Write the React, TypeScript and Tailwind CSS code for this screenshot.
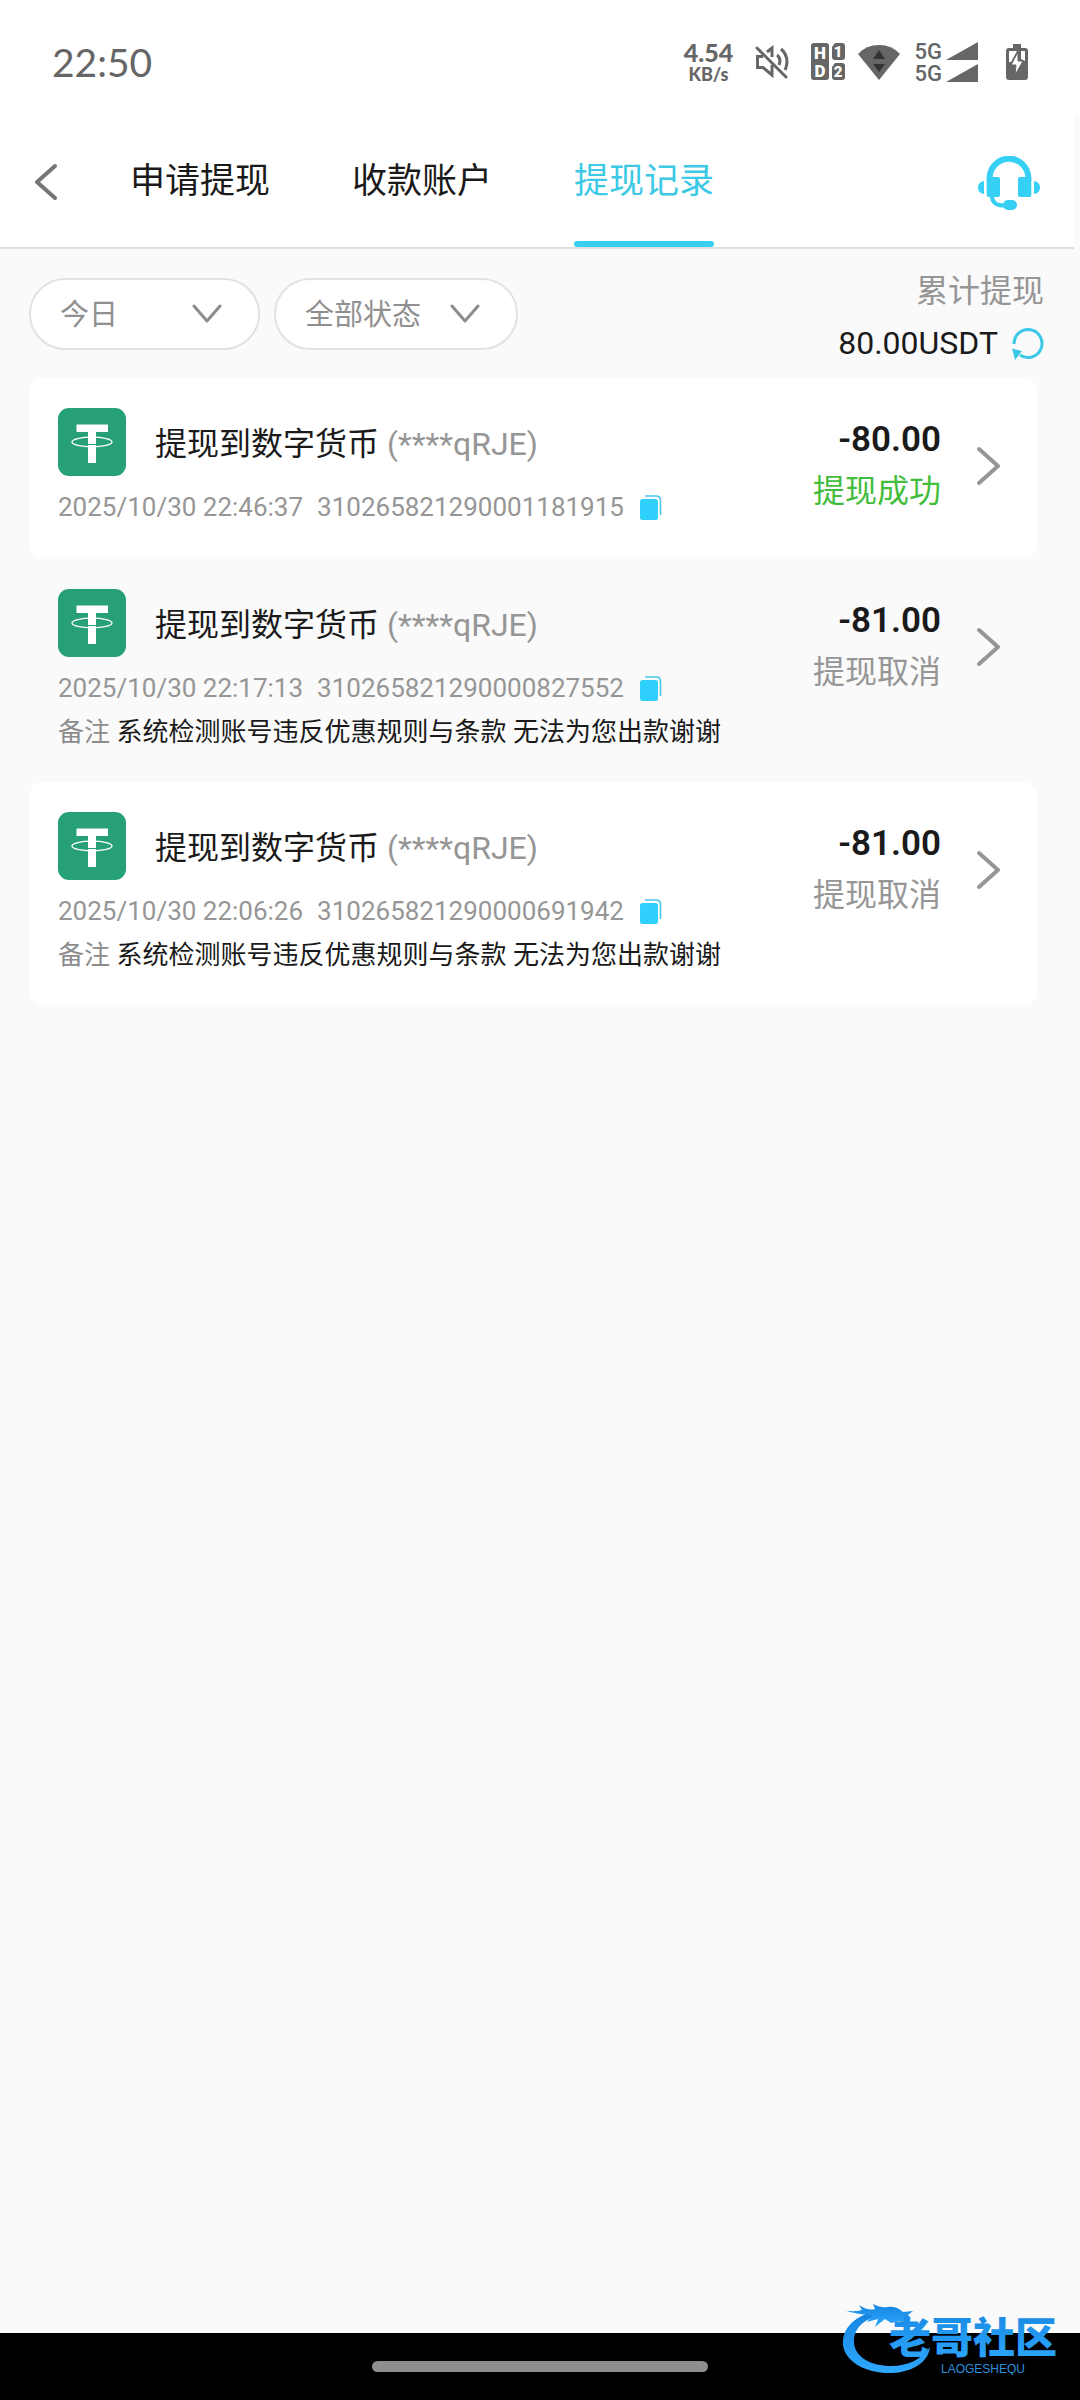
import { useState } from 'react';

const records = [
  { id: '310265821290001181915', time: '2025/10/30 22:46:37', amount: '-80.00', status: '提现成功', ok: true, bg: 'bg-white' },
  {
    id: '310265821290000827552',
    time: '2025/10/30 22:17:13',
    amount: '-81.00',
    status: '提现取消',
    ok: false,
    note: '系统检测账号违反优惠规则与条款 无法为您出款谢谢',
    bg: 'bg-transparent',
  },
  {
    id: '310265821290000691942',
    time: '2025/10/30 22:06:26',
    amount: '-81.00',
    status: '提现取消',
    ok: false,
    note: '系统检测账号违反优惠规则与条款 无法为您出款谢谢',
    bg: 'bg-white',
  },
];

const tabs = ['申请提现', '收款账户', '提现记录'];

function StatusBar() {
  return (
    <div className="h-[115px] bg-white flex justify-between items-start pl-[52px] pr-[52px] text-[#666]">
      <span className="font-['Lato'] text-[39px] leading-[48px] mt-[38px]">22:50</span>
      <div className="flex items-center mt-[40px] h-[44px]">
        <div className="w-[50px] flex flex-col items-center font-['Lato'] font-black">
          <span className="text-[25px] leading-[24px]">4.54</span>
          <span className="text-[18px] leading-[20px]">KB/s</span>
        </div>
        {/* Muted */}
        <svg className="ml-[21px]" width="34" height="34" viewBox="0 0 34 34" fill="none" stroke="#666" strokeWidth="3">
          <path d="M2 3 31 32" strokeLinecap="round" />
          <path d="M8 11.500H2.500V22.500H8L17 30V20" />
          <path d="M12 7 17 3V12" />
          <path d="M22 10Q25 12 25 16.500L24 20" />
          <path d="M26 4Q32 9 32 17Q32 21 30 25" />
        </svg>
        {/* HD on both SIMs */}
        <svg className="ml-[22px]" width="34" height="38" viewBox="0 0 34 38" fill="#666">
          <rect x="0" y="0" width="18" height="37" rx="3" />
          <path d="M24 0H31Q34 0 34 3V14Q34 17 31 17H24Q21 17 21 14V4Z" />
          <path d="M24 20H31Q34 20 34 23V34Q34 37 31 37H24Q21 37 21 34V24Z" />
          <g fill="#fff" fontFamily="Roboto" fontWeight="900" textAnchor="middle">
            <text x="9" y="16" fontSize="17">H</text>
            <text x="9" y="34" fontSize="17">D</text>
            <text x="27" y="14" fontSize="15">1</text>
            <text x="27" y="34" fontSize="15">2</text>
          </g>
        </svg>
        {/* Wi-Fi */}
        <svg className="ml-[13px]" width="42" height="36" viewBox="0 0 42 36" fill="#666">
          <path d="M0 10Q8 1 21 1T42 10L21 36Z" />
          <path d="M15 15 21 6 27 15ZM15 20H27L21 28Z" fill="#333" />
        </svg>
        <div className="ml-[15px] pt-[2px] flex flex-col font-['Roboto'] font-medium text-[22px] leading-[22px]">
          <span>5G</span>
          <span>5G</span>
        </div>
        <svg className="ml-[4px]" width="32" height="40" viewBox="0 0 32 40" fill="#666">
          <path d="M0 18 32 0V18ZM0 40 32 22V40Z" />
        </svg>
        {/* Charging */}
        <svg className="ml-[28px]" width="22" height="36" viewBox="0 0 22 36">
          <path d="M7 0H15V4H19Q22 4 22 7V33Q22 36 19 36H3Q0 36 0 33V7Q0 4 3 4H7Z" fill="#666" />
          <path d="M3 7H11L5 18H3ZM15 7H19V17L15 15Z" fill="#fff" />
          <path d="M12 8 5 21H10L9 31 17 17H12Z" fill="#fff" stroke="#666" strokeWidth="1" />
        </svg>
      </div>
    </div>
  );
}

function Header() {
  const [active, setActive] = useState(2);
  return (
    <header className="h-[134px] mr-[6px] pl-[22px] pr-[27px] bg-white border-b-2 border-[#dedede] flex items-center">
      <button aria-label="返回" className="w-[48px] h-[60px] flex items-center justify-center">
        <svg width="24" height="38" viewBox="0 0 24 38" fill="none" stroke="#757575" strokeWidth="4" strokeLinecap="round" strokeLinejoin="round">
          <path d="M21 4 3 20 21 36" />
        </svg>
      </button>
      <nav className="flex h-full gap-[82px] ml-[60px]">
        {tabs.map((tab, i) => (
          <button
            key={tab}
            onClick={() => setActive(i)}
            className={`relative h-full pt-[2px] text-[35px] ${i === active ? 'text-[#3bc9e6]' : 'text-[#1a1a1a]'}`}
          >
            {tab}
            {i === active && <span className="absolute left-0 right-0 bottom-0 h-[6px] rounded-full bg-[#38d0ee]" />}
          </button>
        ))}
      </nav>
      <button aria-label="客服" className="ml-auto px-[7px] pt-[4px]">
        <svg width="62" height="54" viewBox="0 0 62 54" fill="#36d0f5">
          <path d="M11.700 25V22A19.300 19.300 0 0 1 50.300 22V25" fill="none" stroke="#36d0f5" strokeWidth="6" />
          <path d="M8.700 21H20Q22 21 22 23V39Q22 41 20 41H10.700Q8.700 41 8.700 39ZM42 21H53.300V39Q53.300 41 51.300 41H42Q40 41 40 39V23Q40 21 42 21Z" />
          <path d="M6 25Q0 26 0 31.500T6 38ZM56 25Q62 26 62 31.500T56 38Z" />
          <path d="M14 40Q14 50 27 49.500" fill="none" stroke="#36d0f5" strokeWidth="4" />
          <rect x="25" y="44" width="14" height="10" rx="5" />
        </svg>
      </button>
    </header>
  );
}

function FilterSelect({ label, options, width }: { label: string; options: string[]; width: string }) {
  return (
    <div className={`relative h-[72px] ${width}`}>
      <select
        aria-label={label}
        className="appearance-none w-full h-full rounded-full border-2 border-[#e2e2e2] bg-white pt-[4px] pl-[29px] pr-[60px] text-[29px] text-[#909090] outline-none"
      >
        {options.map((o) => (
          <option key={o}>{o}</option>
        ))}
      </select>
      <svg
        className="absolute right-[38px] top-[24px] pointer-events-none"
        width="30" height="22" viewBox="0 0 30 22" fill="none" stroke="#8c8c8c" strokeWidth="3" strokeLinecap="round" strokeLinejoin="round"
      >
        <path d="M2 4 15 19 28 4" />
      </svg>
    </div>
  );
}

const TetherIcon = () => (
  <svg width="68" height="68" viewBox="0 0 68 68" className="shrink-0">
    <rect width="68" height="68" rx="11" fill="#279f78" />
    <path d="M18.500 16.500H50V24H38V55H30V24H18.500Z" fill="#fff" />
    <ellipse cx="34" cy="34" rx="20" ry="4.800" fill="none" stroke="#fff" strokeWidth="1.300" />
    <path d="M29 36.500H39" stroke="#279f78" strokeWidth="1" />
  </svg>
);

const CopyIcon = () => (
  <svg width="22" height="25" viewBox="0 0 22 25">
    <rect x="0" y="4" width="18" height="21" rx="2.500" fill="#2fd0fb" />
    <path d="M5 1H16Q20.500 1 20.500 5.500V20" fill="none" stroke="#45c8ea" strokeWidth="1.600" />
  </svg>
);

function RecordCard({ record }: { record: (typeof records)[number] }) {
  return (
    <li className={`flex items-start min-h-[181px] pt-[30px] pb-[27px] pl-[29px] pr-[24px] rounded-[14px] ${record.bg}`}>
      <div className="flex-1 min-w-0">
        <div className="flex items-center h-[68px]">
          <TetherIcon />
          <p className="ml-[29px] pt-[4px] text-[32px] leading-[44px] text-[#1a1a1a]">
            提现到数字货币 <span className="text-[#969696]">(****qRJE)</span>
          </p>
        </div>
        <div className="mt-[9px] flex items-center h-[44px] text-[26px] text-[#969696]">
          <span>{record.time}</span>
          <span className="ml-[14px]">{record.id}</span>
          <button aria-label="复制" className="ml-[16px]">
            <CopyIcon />
          </button>
        </div>
        {record.note && (
          <p className="text-[26px] leading-[45px] text-[#1a1a1a]">
            <span className="text-[#8c8c8c]">备注</span> {record.note}
          </p>
        )}
      </div>
      <div className="flex flex-col items-end pt-[2px]">
        <span className="text-[35px] leading-[60px] font-semibold text-[#1a1a1a]">{record.amount}</span>
        <span className={`text-[32px] leading-[42px] ${record.ok ? 'text-[#43bd3e]' : 'text-[#969696]'}`}>{record.status}</span>
      </div>
      <button aria-label="查看详情" className="ml-[24px] w-[48px] h-[116px] flex items-center justify-center">
        <svg width="24" height="40" viewBox="0 0 24 40" fill="none" stroke="#969696" strokeWidth="4" strokeLinecap="round" strokeLinejoin="round">
          <path d="M2 3 21 20 2 37" />
        </svg>
      </button>
    </li>
  );
}

function Watermark() {
  return (
    <svg className="absolute right-[15px] bottom-[25px]" width="224" height="72" viewBox="0 0 224 72">
      <defs>
        <linearGradient id="wm" x1="0" y1="0" x2="0" y2="1">
          <stop offset="0" stopColor="#1585e0" />
          <stop offset="1" stopColor="#2fa8ff" />
        </linearGradient>
      </defs>
      <g fill="url(#wm)">
        {/* Dragon body */}
        <path d="M28 10C10 16 1 28 2 42C4 59 26 71 51 70C74 69 88 57 89 44C82 55 68 63 50 63C30 63 14 54 13 40C12 28 20 18 34 14Z" />
        {/* Head and whiskers */}
        <path d="M0 6Q10 10 21 7L18 2Q27 8 34 6L32 1Q40 5 46 4Q56 3 62 9L72 8L67 12L70 16L62 15L69 20L58 18L50 20L44 16L34 24L37 16L26 19L32 12Q16 12 0 6Z" />
        <text x="48" y="50" fontSize="42" fontWeight="900" fontFamily="'Noto Sans CJK SC', sans-serif">老哥社区</text>
      </g>
      <text x="100" y="70" fontSize="12" fill="#2a8fdd" fontFamily="'Liberation Sans', sans-serif">LAOGESHEQU</text>
    </svg>
  );
}

export default function App() {
  return (
    <div className="relative min-h-screen flex flex-col bg-[#fafafa] font-['Roboto','Noto_Sans_CJK_SC',sans-serif]">
      <StatusBar />
      <Header />

      <main className="flex-1">
        {/* Filters and total */}
        <div className="flex justify-between items-start pl-[29px] pr-[36px] pt-[16px] pb-[9px]">
          <div className="flex gap-[14px] mt-[13px]">
            <FilterSelect label="日期" options={['今日', '昨日', '近七日']} width="w-[231px]" />
            <FilterSelect label="状态" options={['全部状态', '提现成功', '提现取消']} width="w-[244px]" />
          </div>
          <div className="text-right">
            <p className="text-[32px] leading-[52px] text-[#969696]">累计提现</p>
            <div className="flex items-center gap-[14px] h-[52px] text-[32px] text-[#1a1a1a]">
              <span>80.00USDT</span>
              <button aria-label="刷新">
                <svg width="32" height="33" viewBox="0 0 32 33" fill="none">
                  <path d="M2 17A14 14 0 1 1 8 28" stroke="#3cc9e8" strokeWidth="3" />
                  <path d="M0 21.500 10 24 3 33Z" fill="#3cc9e8" />
                </svg>
              </button>
            </div>
          </div>
        </div>

        <ul className="pl-[29px] pr-[43px]">
          {records.map((r) => (
            <RecordCard key={r.id} record={r} />
          ))}
        </ul>
      </main>

      {/* Gesture bar */}
      <div className="h-[67px] bg-black flex justify-center items-center">
        <div className="w-[336px] h-[11px] rounded-full bg-[#8e8e8e]" />
      </div>
      <Watermark />
    </div>
  );
}
